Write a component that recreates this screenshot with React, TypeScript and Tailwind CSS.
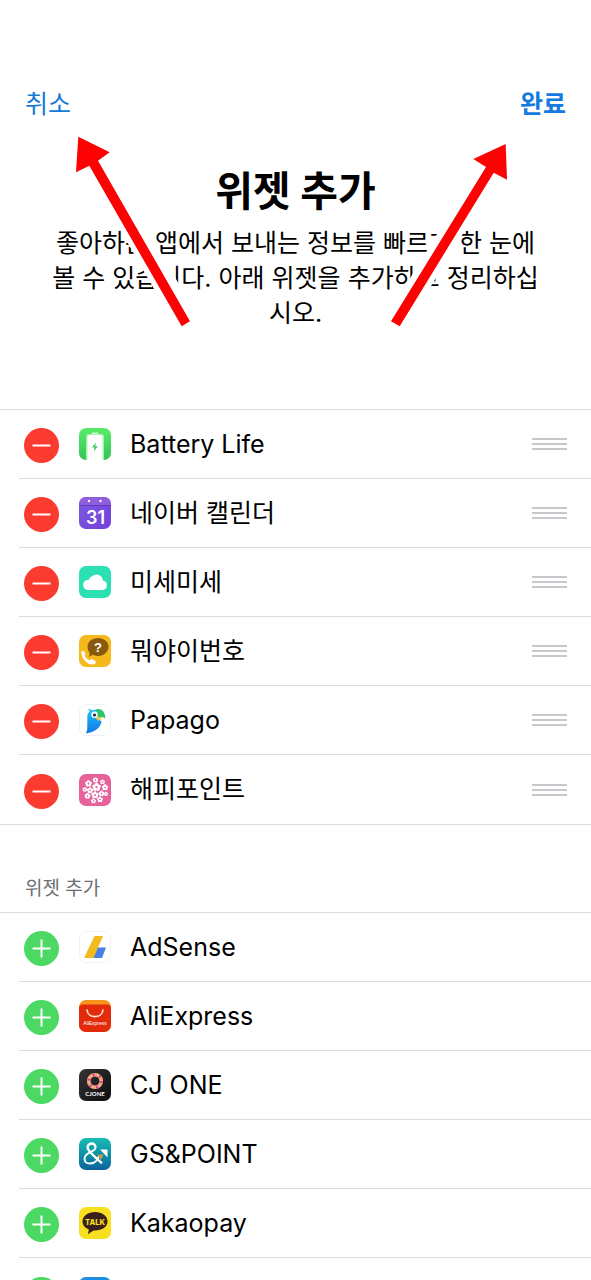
import type { ReactNode } from "react";

type Widget = { name: string; icon: ReactNode };

function Tile({ fill, children }: { fill: string; children?: ReactNode }) {
  return (
    <svg viewBox="0 0 32 32" className="size-8 shrink-0 overflow-hidden rounded-[7px]" aria-hidden="true">
      <defs>
        <linearGradient id="violet" x1="0" y1="0" x2="1" y2="1">
          <stop offset="0" stopColor="#7a5be0" />
          <stop offset="1" stopColor="#7440dc" />
        </linearGradient>
        <linearGradient id="leaf" x1="0" y1="0" x2="0" y2="1">
          <stop offset="0" stopColor="#58ec6a" />
          <stop offset="1" stopColor="#35c455" />
        </linearGradient>
        <linearGradient id="ocean" x1="0" y1="0" x2="0" y2="1">
          <stop offset="0" stopColor="#16bdb4" />
          <stop offset="1" stopColor="#0a639b" />
        </linearGradient>
        <linearGradient id="coal" x1="0" y1="0" x2="1" y2="1">
          <stop offset="0" stopColor="#343434" />
          <stop offset="1" stopColor="#0d0d0d" />
        </linearGradient>
        <linearGradient id="feather" x1="0" y1="0" x2="0" y2="1">
          <stop offset="0" stopColor="#21c4f5" />
          <stop offset="1" stopColor="#1474e6" />
        </linearGradient>
      </defs>
      <rect width="32" height="32" fill={fill} />
      {children}
    </svg>
  );
}

function Outline() {
  return <rect x="0.5" y="0.5" width="31" height="31" rx="6.5" fill="none" stroke="#f1f1f3" />;
}

const battery = (
  <Tile fill="url(#leaf)">
    <path d="M7 32V8.500Q7 6 9.500 6H22.500Q25 6 25 8.500V32Z" fill="#a5f2af" />
    <path d="M8.500 32V9Q8.500 7 10.500 7H21.500Q23.500 7 23.500 9V32Z" fill="#fff" />
    <rect x="12.500" y="4.500" width="7" height="1.600" rx="0.800" fill="#d8fadc" />
    <path d="M16.800 14.500L13 19.600H15.500L14.900 23.500L18.800 18.200H16.200Z" fill="#3cc95b" />
  </Tile>
);

const calendar = (
  <Tile fill="url(#violet)">
    <rect width="32" height="8.500" fill="#8f5ddd" />
    <rect y="8" width="32" height="1" fill="#6238bd" />
    <circle cx="10" cy="4" r="1.200" fill="#fff" />
    <circle cx="21.500" cy="4" r="1.200" fill="#fff" />
    <text x="16.500" y="26.800" textAnchor="middle" fontFamily="Inter, sans-serif" fontWeight="600" fontSize="18" fill="#fff">31</text>
  </Tile>
);

const cloud = (
  <Tile fill="#2be0b2">
    <path d="M9 24A5 5 0 0 1 7.500 14.300Q9 13.700 10 13.900A4 4 0 0 1 13 10.300A6.500 6.500 0 0 1 24 14.500A4.800 4.800 0 0 1 23 24Z" fill="#fff" />
  </Tile>
);

const caller = (
  <Tile fill="#f5b91c">
    <path d="M19 3C25 3 29.500 6.800 29.500 11.800S25 21 19.500 21Q16.500 21 14 19.800L9.500 22Q11.300 19.500 10.500 17.500Q8.500 15 8.500 11.800C8.500 6.800 13 3 19 3Z" fill="#89590d" />
    <text x="19" y="16.500" textAnchor="middle" fontFamily="Liberation Sans, sans-serif" fontWeight="700" fontSize="13" fill="#fff">?</text>
    <path d="M2.300 18.500Q1.500 16.500 3.500 16L5.500 16.500L6.500 19.500L5.600 21Q7.500 24 10.800 25.300L12.500 24L16.500 26Q17.500 28.500 14.500 29.500Q10 30 6.500 26.500Q2.800 23 2.300 18.500Z" fill="#fff" />
  </Tile>
);

const parrot = (
  <Tile fill="#fff">
    <Outline />
    <path d="M9.500 4.500L13.500 6.500Q16 5 19 5.500L20 16L22.500 17C22 24 15.500 28 7 29.500Q8.800 26 8.300 20V12Q8.300 9 10.800 7.500Q9.500 6.500 9.500 4.500Z" fill="url(#feather)" />
    <path d="M17.500 5Q26 4 26.500 14.500Q25 13 22.500 13H17.500Z" fill="#2cc568" />
    <path d="M16.500 13H22.500Q22.500 16.500 18.500 16.500Z" fill="#f5c64b" />
    <circle cx="15.500" cy="10.800" r="3.200" fill="#fff" />
    <circle cx="15.500" cy="11" r="1.600" fill="#172b4d" />
  </Tile>
);

const petals: [number, number, number][] = [
  [17.5, 13, 1.25], [9.500, 9.500, 1], [16.500, 6, 0.8], [23.5, 8, 0.75], [26, 13.500, 0.9], [11, 16.500, 0.9],
  [5.800, 15.500, 0.7], [16, 21, 1.050], [22.500, 19.500, 0.85], [8.500, 22, 0.85], [14.500, 27, 0.75], [21, 25.500, 0.85], [27, 20, 0.65],
];

const blossoms = (
  <Tile fill="#e5629a">
    {petals.map(([x, y, s]) => (
      <g key={`${x}-${y}`} transform={`translate(${x} ${y}) scale(${s})`}>
        <circle cy="-2" r="1.500" fill="#fff" />
        <circle cx="1.900" cy="-0.600" r="1.500" fill="#fff" />
        <circle cx="1.200" cy="1.600" r="1.500" fill="#fff" />
        <circle cx="-1.200" cy="1.600" r="1.500" fill="#fff" />
        <circle cx="-1.900" cy="-0.600" r="1.500" fill="#fff" />
        <circle r="0.900" fill="#e5629a" />
      </g>
    ))}
  </Tile>
);

const adsense = (
  <Tile fill="#fff">
    <Outline />
    <path d="M18.500 16.500H27L23 27H14Z" fill="#4780e8" />
    <path d="M15.500 5H24L14.500 27H5Z" fill="#f2ba1f" />
  </Tile>
);

const aliexpress = (
  <Tile fill="#f7941e">
    <path d="M0 32V8Q0 4.500 4 4.500H28Q32 4.500 32 8V32Z" fill="#e32b0c" />
    <path d="M8 10C9 18.800 23 18.800 24 10" fill="none" stroke="#ffe2cf" strokeWidth="1.700" strokeLinecap="round" />
    <text x="16" y="25" textAnchor="middle" fontFamily="Liberation Sans, sans-serif" fontSize="5" fill="#fff">AliExpress</text>
  </Tile>
);

const cjone = (
  <Tile fill="url(#coal)">
    <circle cx="16" cy="12" r="6.300" fill="none" stroke="#f4b0a5" strokeWidth="3.600" />
    <circle cx="16" cy="12" r="6.300" fill="none" stroke="#d9467b" strokeWidth="3.200" strokeDasharray="2 4.600" />
    <circle cx="16" cy="12" r="6.300" fill="none" stroke="#f6a246" strokeWidth="3" strokeDasharray="1.500 5.100" strokeDashoffset="-3" />
    <text x="16" y="27" textAnchor="middle" fontFamily="Lato, sans-serif" fontWeight="700" fontSize="6" fill="#fff">CJONE</text>
  </Tile>
);

const gspoint = (
  <Tile fill="url(#ocean)">
    <path d="M16.500 9.800C16.500 3.800 8.300 4.300 8.600 9.800C8.800 13.800 17 19.500 23 25.300" fill="none" stroke="#fff" strokeWidth="2.400" />
    <path d="M16.500 9.800C16.300 12.500 12 13.500 9 15.500C3.500 19.200 5 25.500 10.800 25.500C15.500 25.500 19 22 20 17.800" fill="none" stroke="#fff" strokeWidth="1.900" />
    <path d="M21 11.500H28.500V19.500Z" fill="#fff" />
    <path d="M18 16.500H24.500L22 22Z" fill="#c69b4f" />
  </Tile>
);

const kakao = (
  <Tile fill="#f6e020">
    <path d="M16 5C23 5 28.500 9 28.500 14.500S23 23.500 16 23.500H14.500L9 27.300L9.800 22.500C6 21 3.500 18 3.500 14.500C3.500 9 9 5 16 5Z" fill="#3b1f1b" />
    <text x="16" y="17.500" textAnchor="middle" fontFamily="Inter, sans-serif" fontWeight="800" fontSize="7.500" fill="#f6e020">TALK</text>
  </Tile>
);

const active: Widget[] = [
  { name: "Battery Life", icon: battery },
  { name: "네이버 캘린더", icon: calendar },
  { name: "미세미세", icon: cloud },
  { name: "뭐야이번호", icon: caller },
  { name: "Papago", icon: parrot },
  { name: "해피포인트", icon: blossoms },
];

const available: Widget[] = [
  { name: "AdSense", icon: adsense },
  { name: "AliExpress", icon: aliexpress },
  { name: "CJ ONE", icon: cjone },
  { name: "GS&POINT", icon: gspoint },
  { name: "Kakaopay", icon: kakao },
  { name: "", icon: <Tile fill="#1d8fe1" /> },
];

function Row({ widget, added }: { widget: Widget; added: boolean }) {
  return (
    <li className="group pl-[19px] last:border-b last:border-[#dcdcdf] last:pl-0">
      <div className="flex h-[69px] items-center border-b border-[#dcdcdf] pr-6 pl-[5px] group-last:border-b-0 group-last:pl-6">
        <button
          type="button"
          aria-label={`${widget.name} ${added ? "제거" : "추가"}`.trim()}
          className={`mt-[3px] mr-5 size-[35px] shrink-0 rounded-full ${added ? "bg-[#fb3b30]" : "bg-[#4bd964]"}`}
        >
          <svg viewBox="0 0 35 35" className="size-full" aria-hidden="true">
            <path d={added ? "M8.500 17.500H26.500" : "M8.500 17.500H26.500M17.500 8.500V26.500"} stroke="#fff" strokeWidth="2" />
          </svg>
        </button>
        {widget.icon}
        <span className="ml-[19px] flex-1">{widget.name}</span>
        {added && (
          <button type="button" aria-label={`${widget.name} 순서 변경`} className="flex w-[35px] flex-col gap-[3px]">
            <span className="h-0.5 w-full bg-[#c8c8cc]" />
            <span className="h-0.5 w-full bg-[#c8c8cc]" />
            <span className="h-0.5 w-full bg-[#c8c8cc]" />
          </button>
        )}
      </div>
    </li>
  );
}

function WidgetList({ items, added }: { items: Widget[]; added: boolean }) {
  return (
    <ul className="border-t border-[#dcdcdf]">
      {items.map((widget, i) => (
        <Row key={i} widget={widget} added={added} />
      ))}
    </ul>
  );
}

export default function App() {
  return (
    <main className="h-screen overflow-hidden bg-white font-['Inter','Noto_Sans_CJK_KR',sans-serif] text-[25px] leading-[35px] text-black">
      <header className="relative pt-[87px]">
        <nav className="flex justify-between px-[25px] text-[#147ad6]">
          <button type="button">취소</button>
          <button type="button" className="font-bold text-[#147ae0]">완료</button>
        </nav>
        <div className="mt-[43px] px-11 text-center">
          <h1 className="text-[41px] leading-[52px] font-bold">위젯 추가</h1>
          <p className="mt-[9px]">
            좋아하는 앱에서 보내는 정보를 빠르게 한 눈에 볼 수 있습니다. 아래 위젯을 추가하고 정리하십시오.
          </p>
        </div>
        <svg viewBox="70 130 130 200" className="absolute top-[130px] left-[70px] h-[200px] w-[130px]" aria-hidden="true">
          <path d="M97 165L189 326" stroke="#fff" strokeWidth="24" />
          <path d="M78.300 136.700L109.700 152.300L98 160.700L190 321.300L181.700 326.300L89.300 165.700L76 172.300Z" fill="#fd0202" />
        </svg>
        <svg viewBox="385 130 130 200" className="absolute top-[130px] right-[76px] h-[200px] w-[130px]" aria-hidden="true">
          <path d="M489 170L395 324" stroke="#fff" strokeWidth="22" />
          <path d="M505.700 144L507 179.700L493.700 172.700L399.700 326.300L391 321.300L486 167L473.300 159Z" fill="#fd0202" />
        </svg>
      </header>
      <section className="mt-[78px]">
        <WidgetList items={active} added />
      </section>
      <section className="mt-[50px]">
        <h2 className="mb-[9px] px-[25px] text-[19px] leading-7 text-[#6d6d72]">위젯 추가</h2>
        <WidgetList items={available} added={false} />
      </section>
    </main>
  );
}
